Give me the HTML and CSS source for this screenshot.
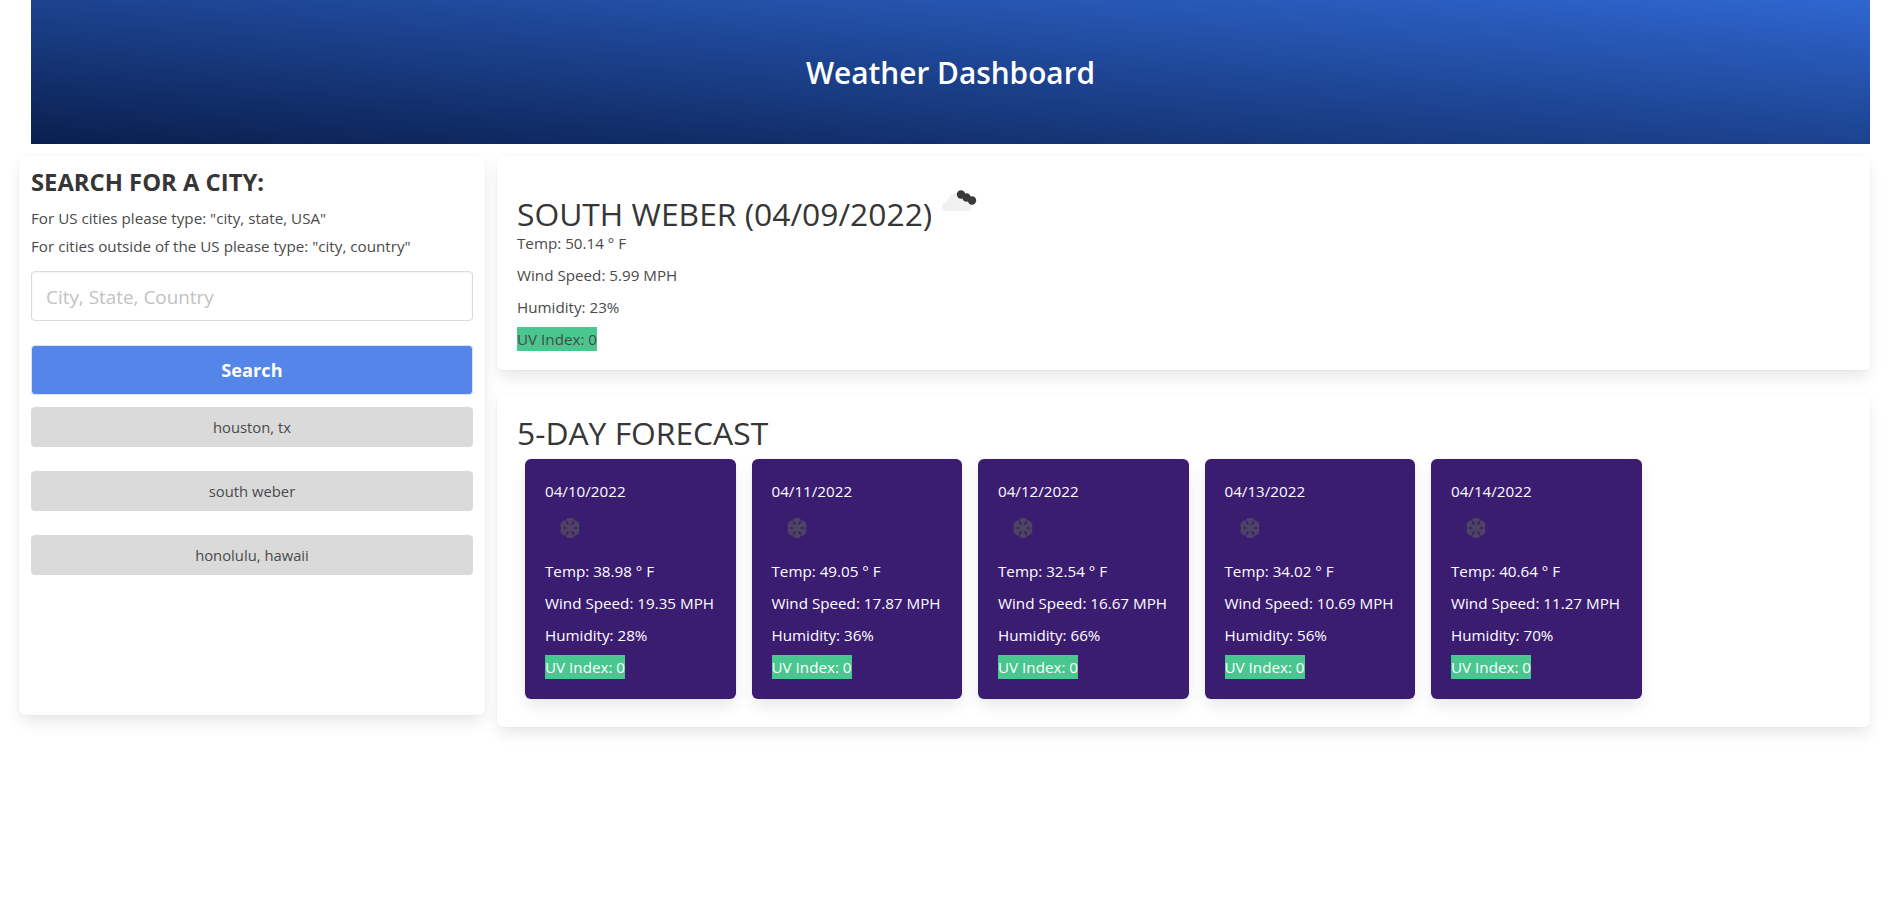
FILE: index.html
```html
<!DOCTYPE html>
<html lang="en">
<head>
<meta charset="utf-8">
<title>Weather Dashboard</title>
<link rel="stylesheet" href="styles.css">
</head>
<body>
<svg class="defs" width="0" height="0" aria-hidden="true">
  <symbol id="snow" viewBox="0 0 50 50">
    <g fill="none" stroke="#4e4362" stroke-width="3.200">
      <path d="M25 15v20M16.300 20l17.400 10M16.300 30l17.400-10"/>
      <path d="M21.800 15.800 25 19l3.200-3.200M21.800 34.200 25 31l3.200 3.200"/>
      <path d="M15.800 24 20 22l-.8-4.400M34.200 26 30 28l.8 4.400M15.800 26 20 28l-.8 4.400M34.200 24 30 22l.8-4.400"/>
    </g>
  </symbol>
</svg>
<header class="hero"><h1>Weather Dashboard</h1></header>
<main class="layout">
  <aside class="box search">
    <h2>SEARCH FOR A CITY:</h2>
    <p>For US cities please type: "city, state, USA"</p>
    <p>For cities outside of the US please type: "city, country"</p>
    <input class="city" type="text" placeholder="City, State, Country">
    <button class="go" type="button">Search</button>
    <button class="past" type="button">houston, tx</button>
    <button class="past" type="button">south weber</button>
    <button class="past" type="button">honolulu, hawaii</button>
  </aside>
  <section class="content">
    <div class="box today">
      <h2 class="title">SOUTH WEBER (04/09/2022) <svg class="cloud" viewBox="0 0 50 50" width="50" height="50" aria-hidden="true">
        <path fill="#f1f1f1" d="M6 35c-3 0-4-2-4-4 0-3 2-5 5-5 1-5 5-9 10-9 4 0 7 2 9 5 3 0 6 3 6 7 0 3-2 6-5 6z"/>
        <g fill="#3a3a3a"><circle cx="21" cy="18.500" r="4.200"/><circle cx="26.500" cy="21.500" r="4.200"/><circle cx="32" cy="24.500" r="4.200"/></g>
      </svg></h2>
      <p>Temp: 50.14 ° F</p>
      <p>Wind Speed: 5.99 MPH</p>
      <p>Humidity: 23%</p>
      <p><span class="uv">UV Index: 0</span></p>
    </div>
    <div class="box outlook">
      <h2 class="title">5-DAY FORECAST</h2>
      <div class="days">
        <article class="day">
          <p class="date">04/10/2022</p>
          <svg class="flake" width="50" height="50" aria-hidden="true"><use href="#snow"/></svg>
          <p>Temp: 38.98 ° F</p><p>Wind Speed: 19.35 MPH</p><p>Humidity: 28%</p><p><span class="uv">UV Index: 0</span></p>
        </article>
        <article class="day">
          <p class="date">04/11/2022</p>
          <svg class="flake" width="50" height="50" aria-hidden="true"><use href="#snow"/></svg>
          <p>Temp: 49.05 ° F</p><p>Wind Speed: 17.87 MPH</p><p>Humidity: 36%</p><p><span class="uv">UV Index: 0</span></p>
        </article>
        <article class="day">
          <p class="date">04/12/2022</p>
          <svg class="flake" width="50" height="50" aria-hidden="true"><use href="#snow"/></svg>
          <p>Temp: 32.54 ° F</p><p>Wind Speed: 16.67 MPH</p><p>Humidity: 66%</p><p><span class="uv">UV Index: 0</span></p>
        </article>
        <article class="day">
          <p class="date">04/13/2022</p>
          <svg class="flake" width="50" height="50" aria-hidden="true"><use href="#snow"/></svg>
          <p>Temp: 34.02 ° F</p><p>Wind Speed: 10.69 MPH</p><p>Humidity: 56%</p><p><span class="uv">UV Index: 0</span></p>
        </article>
        <article class="day">
          <p class="date">04/14/2022</p>
          <svg class="flake" width="50" height="50" aria-hidden="true"><use href="#snow"/></svg>
          <p>Temp: 40.64 ° F</p><p>Wind Speed: 11.27 MPH</p><p>Humidity: 70%</p><p><span class="uv">UV Index: 0</span></p>
        </article>
      </div>
    </div>
  </section>
</main>
</body>
</html>
```
FILE: styles.css
```css
* { box-sizing: border-box; }
html, body { margin: 0; background: #fff; }
body {
  font-family: "Open Sans", "Noto Sans", sans-serif;
  font-size: 15.2px;
  line-height: 24px;
  color: #4a4a4a;
  height: 911px;
  overflow: hidden;
}
p, h1, h2 { margin: 0; }
.defs { position: absolute; }

.hero {
  margin: 0 26px 12px 31px;
  height: 144px;
  padding-top: 2px;
  display: flex;
  align-items: center;
  justify-content: center;
  background: linear-gradient(to top right, #0a1f4e, #2f66d0);
}
.hero h1 { font-size: 29.8px; font-weight: 600; line-height: 36px; color: #fff; }

.layout {
  display: grid;
  grid-template-columns: 466px 1373px;
  gap: 12px;
  margin-left: 19px;
  align-items: start;
}
.box {
  background: #fff;
  border-radius: 6px;
  box-shadow: 0 8px 16px -2px rgba(10,10,10,.1), 0 0 0 1px rgba(10,10,10,.02);
}

.search { height: 559px; padding: 12px; display: flex; flex-direction: column; }
.search h2 { font-size: 23.8px; font-weight: 700; line-height: 28px; color: #363636; margin-bottom: 8px; }
.search p { line-height: 28px; }
.city {
  margin-top: 11px;
  height: 50px;
  padding: 2px 14px 0;
  border: 1px solid #dbdbdb;
  border-radius: 4px;
  font: 18.9px "Open Sans", sans-serif;
  color: #363636;
  box-shadow: inset 0 1px 2px rgba(10,10,10,.05);
  width: 100%;
}
.city::placeholder { color: #c2c2c2; opacity: 1; }
.go {
  margin-top: 24px;
  height: 50px;
  border: 1px solid #dbe3f5;
  border-radius: 4px;
  background: #5485e8;
  color: #fff;
  font: 700 18.2px "Open Sans", sans-serif;
}
.past {
  margin: 12px 0;
  height: 40px;
  border: 0;
  border-radius: 4px;
  background: #dadada;
  color: #4a4a4a;
  font: 14.8px "Open Sans", sans-serif;
}

.content { display: flex; flex-direction: column; gap: 24px; }
.title { font-size: 31.8px; font-weight: 400; line-height: 37px; color: #363636; }
.today { padding: 20px 20px 19px; height: 214px; }
.today .title { height: 55px; white-space: nowrap; }
.cloud { vertical-align: baseline; }
.today p { margin-bottom: 8px; }
.today p:last-child { margin-bottom: 0; }
.uv { background: #48c78e; display: inline-block; height: 24px; }

.outlook { padding: 20px; height: 333px; }
.days { display: flex; gap: 16px; margin: 8px; }
.day {
  width: 210.5px;
  height: 240px;
  padding: 20px;
  background: #3a1c71;
  color: #fff;
  border-radius: 6px;
  box-shadow: 0 8px 16px -2px rgba(10,10,10,.1), 0 0 0 1px rgba(10,10,10,.02);
}
.day p { margin-bottom: 8px; }
.day p:last-child { margin-bottom: 0; }
.day .date { margin-bottom: 0; }
.flake { display: block; margin-bottom: 6px; }
```
